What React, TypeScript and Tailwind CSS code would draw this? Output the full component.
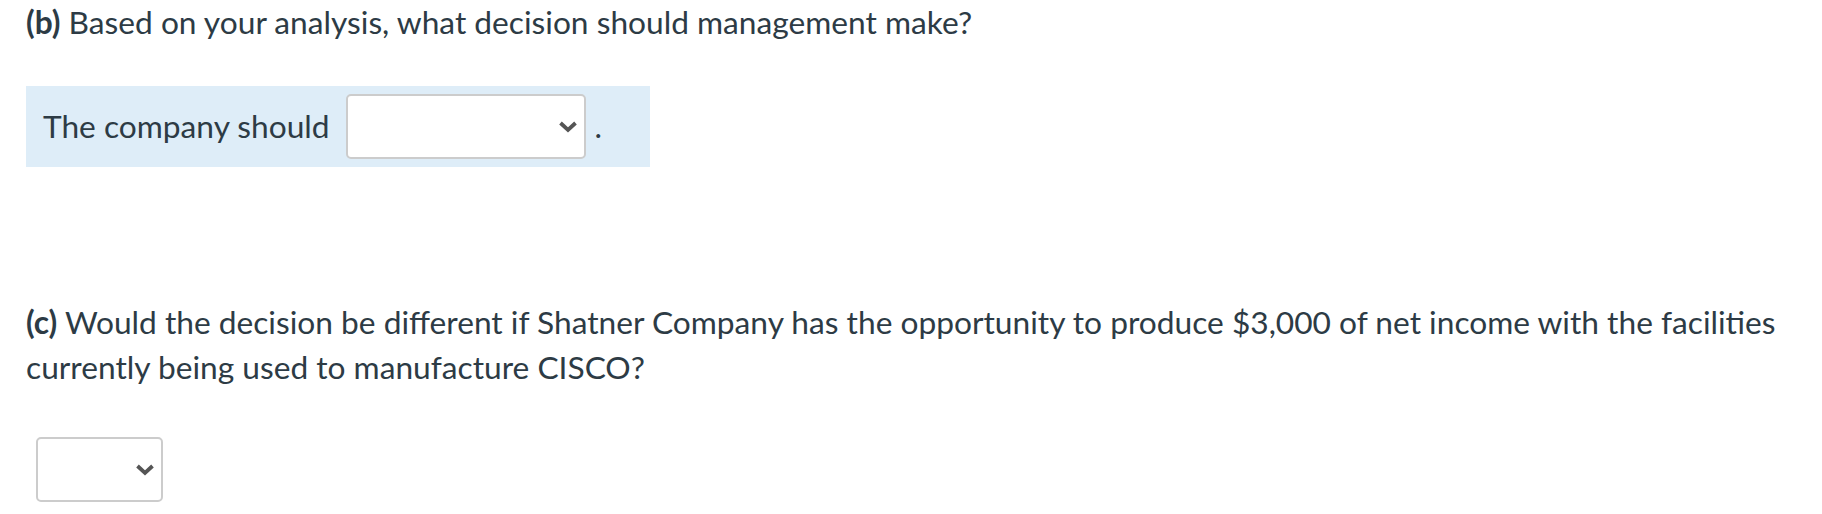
import React from "react";

function Chevron() {
  return (
    <svg width="20" height="13" viewBox="0 0 20 13" className="block">
      <path d="M2.5 3 L10 10 L17.5 3" fill="none" stroke="#555555" strokeWidth="3.8" strokeLinecap="butt" strokeLinejoin="miter" />
    </svg>
  );
}

function Select({ w }: { w: string }) {
  return (
    <div className={`${w} h-[65px] bg-white border-2 border-[#cccccc] rounded-[5px] flex items-center justify-end pr-[6px] shrink-0`}>
      <Chevron />
    </div>
  );
}

export default function App() {
  return (
    <div className="w-[1822px] h-[514px] bg-white text-[#2d3b45] text-[31.7px] leading-[45px] pl-[26px]" style={{ fontFamily: "Lato, 'Noto Sans', sans-serif" }}>
      <p>
        <b className="font-bold">(b)</b> Based on your analysis, what decision should management make?
      </p>
      <div className="mt-[41px] w-[624px] h-[81px] bg-[#deedf8] flex items-center pl-[17px]">
        <span>The company should</span>
        <div className="ml-[16px]">
          <Select w="w-[240px]" />
        </div>
        <span className="ml-[9px]">.</span>
      </div>
      <p className="mt-[133px]">
        <b className="font-bold">(c)</b> Would the decision be different if Shatner Company has the opportunity to produce $3,000 of net income with the facilities currently being used to manufacture CISCO?
      </p>
      <div className="mt-[47px] ml-[10px]">
        <Select w="w-[127px]" />
      </div>
    </div>
  );
}
